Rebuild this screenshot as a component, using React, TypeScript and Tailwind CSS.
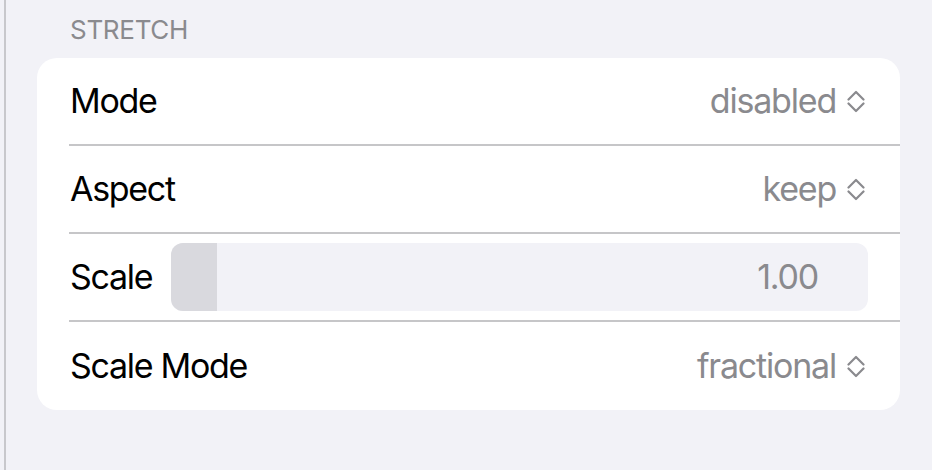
import React from "react";

function Chevrons() {
  return (
    <svg width="18" height="25" viewBox="0 0 18 25" className="shrink-0" fill="none">
      <path d="M1.5 10.5 L9 3 L16.5 10.5" stroke="#8a8a8e" strokeWidth="2.2" strokeLinecap="round" strokeLinejoin="round" />
      <path d="M1.5 14.5 L9 22 L16.5 14.5" stroke="#8a8a8e" strokeWidth="2.2" strokeLinecap="round" strokeLinejoin="round" />
    </svg>
  );
}

function PickerRow({ label, value, last }: { label: string; value: string; last?: boolean }) {
  return (
    <div className="flex h-[88px] flex-col">
      <div className="flex flex-1 items-center justify-between pl-[33px] pr-[35px]">
        <span className="text-[34px] leading-none tracking-[-1.3px] text-black">{label}</span>
        <span className="flex items-center gap-[11px] text-[34px] leading-none tracking-[-1.2px] text-[#8a8a8e]">
          {value}
          <Chevrons />
        </span>
      </div>
      {!last && <div className="ml-[32px] h-[2px] bg-[#c6c6c8]" />}
    </div>
  );
}

export default function App() {
  return (
    <div
      className="flex h-[470px] w-[932px] bg-[#f2f2f7]"
      style={{ fontFamily: "Inter, 'Noto Sans', sans-serif" }}
    >
      <div className="w-[4px]" />
      <div className="w-[2px] bg-[#c8c8cc]" />
      <div className="flex flex-1 flex-col pl-[31px] pr-[32px]">
        <div className="pl-[33px] pt-[17px] text-[26px] leading-[26px] tracking-[-0.3px] text-[#8a8a8e]">STRETCH</div>
        <div className="mt-[15px] overflow-hidden rounded-[20px] bg-white">
          <PickerRow label="Mode" value="disabled" />
          <PickerRow label="Aspect" value="keep" />
          <div className="flex h-[88px] flex-col">
            <div className="flex flex-1 items-center gap-[19px] pl-[33px] pr-[32px]">
              <span className="text-[34px] leading-none tracking-[-1.3px] text-black">Scale</span>
              <div className="flex h-[68px] flex-1 items-center overflow-hidden rounded-[12px] bg-[#f2f2f7]">
                <div className="h-full w-[46px] bg-[#d9d9de]" />
                <div className="flex-1 pr-[50px] text-right text-[34px] leading-none tracking-[-1.2px] text-[#8a8a8e]">1.00</div>
              </div>
            </div>
            <div className="ml-[32px] h-[2px] bg-[#c6c6c8]" />
          </div>
          <PickerRow label="Scale Mode" value="fractional" last />
        </div>
      </div>
    </div>
  );
}
